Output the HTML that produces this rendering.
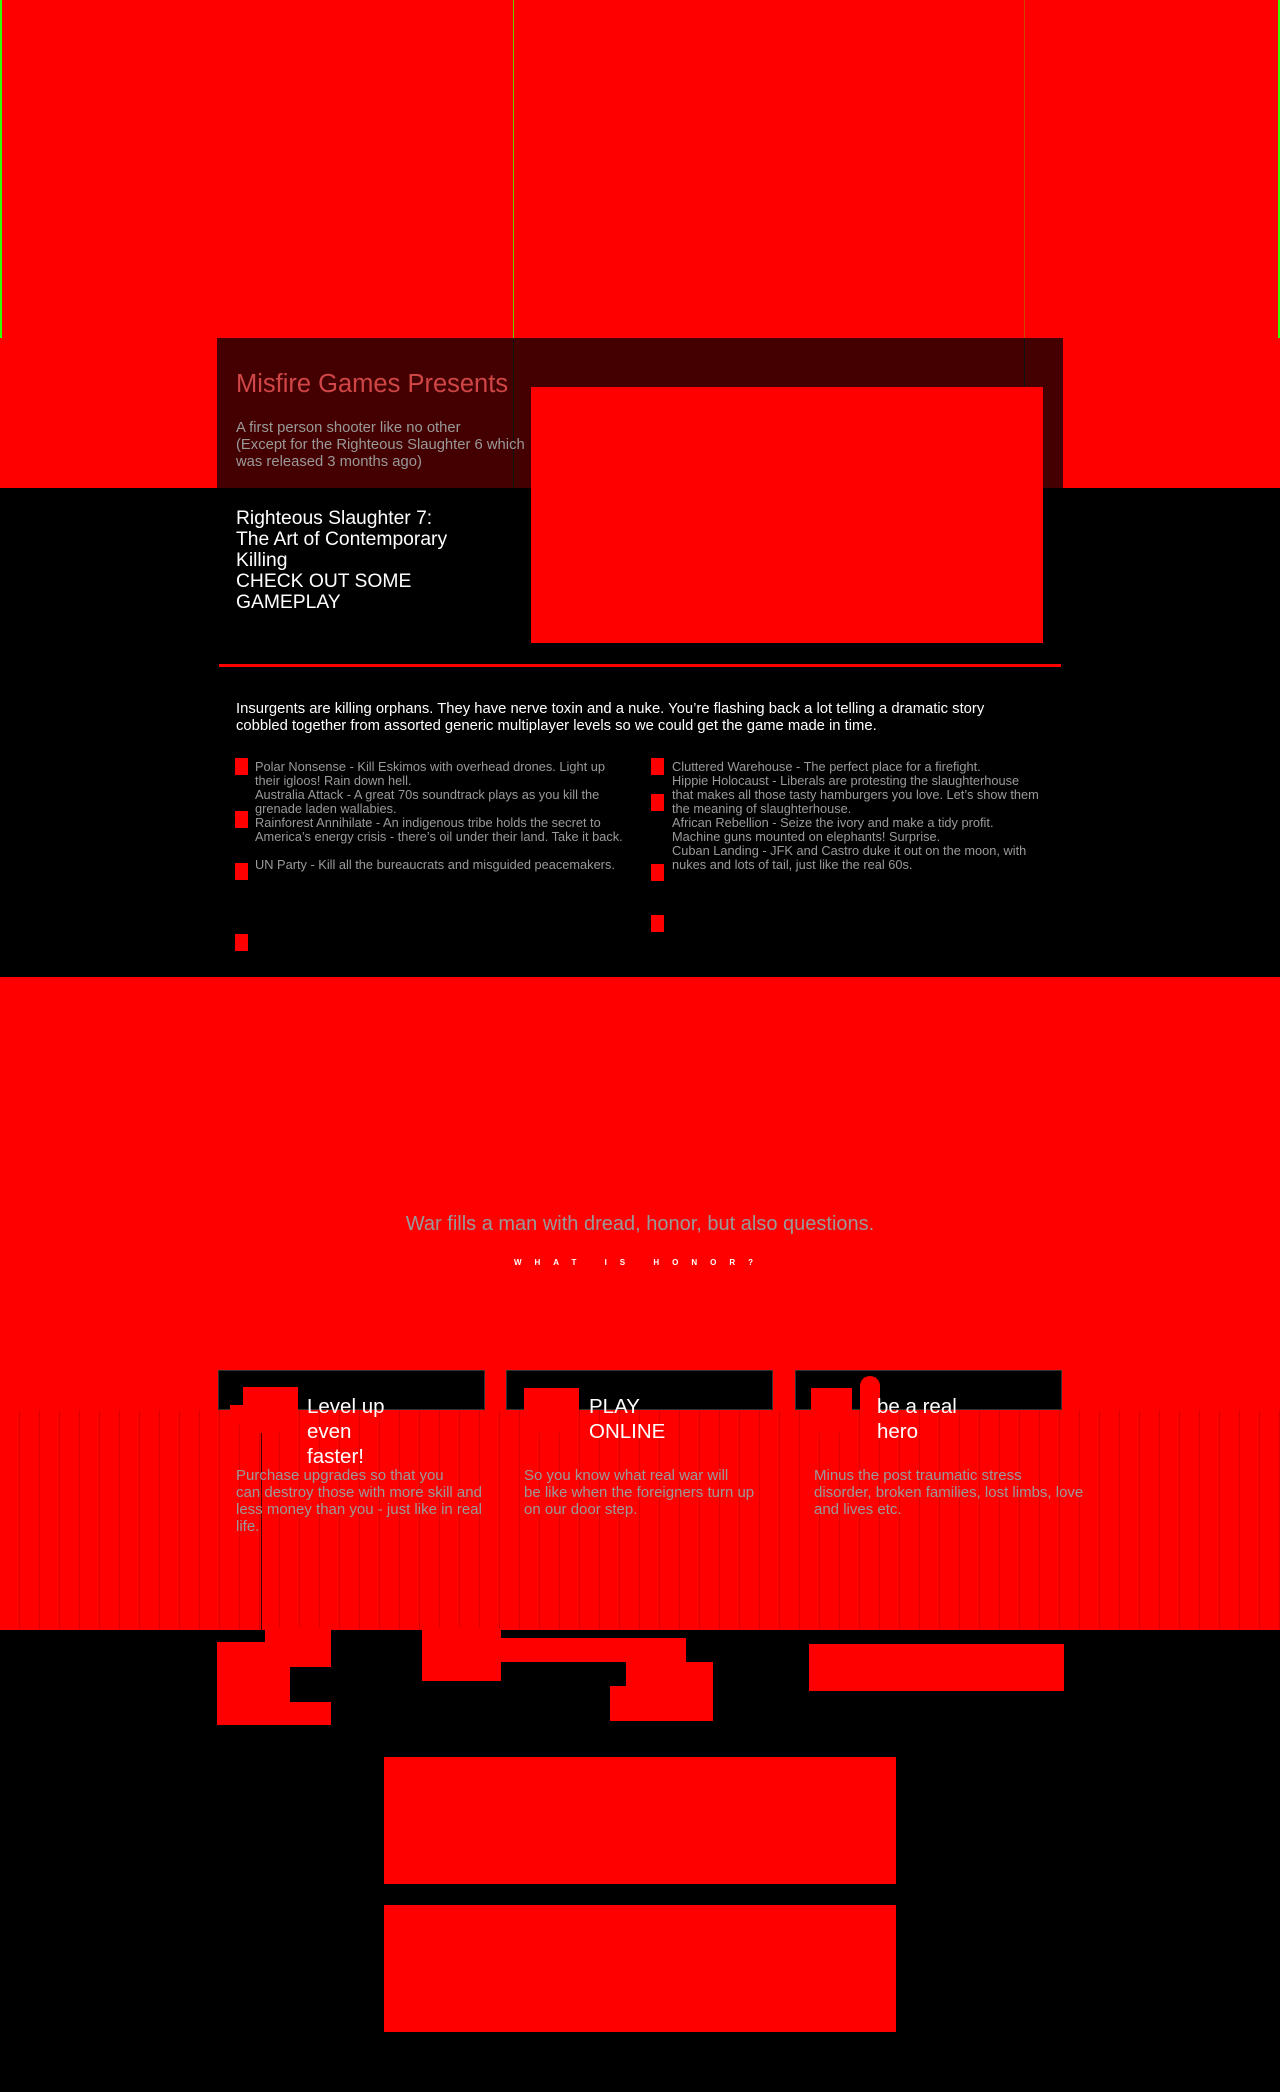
<!DOCTYPE html>
<html><head><meta charset="utf-8"><style>
*{margin:0;padding:0;box-sizing:border-box}
body{width:1280px;height:2092px;background:#000;position:relative;overflow:hidden;font-family:"Liberation Sans",sans-serif}
.a{position:absolute}
.r{background:#f00}
.li{position:absolute;font-size:12.8px;line-height:14px;color:#9a9a9a}
.bul{position:absolute;width:13px;height:17px;background:#f00}
.h{position:absolute;color:#fff;font-size:20.5px;line-height:25px}
.p{position:absolute;color:#9a9a9a;font-size:15px;line-height:17px;white-space:nowrap}
</style></head><body>
<div class="a r" style="left:0;top:0;width:1280px;height:488px"></div>
<div class="a" style="left:0;top:0;width:2px;height:338px;background:#3f0"></div>
<div class="a" style="left:513px;top:0;width:1px;height:338px;background:#6c0"></div>
<div class="a" style="left:1024px;top:0;width:1px;height:338px;background:#c40"></div>
<div class="a" style="left:1278px;top:0;width:2px;height:338px;background:#3f0"></div>
<div class="a" style="left:217px;top:338px;width:846px;height:150px;background:#440000"></div>
<div class="a" style="left:513px;top:338px;width:1px;height:150px;background:#111"></div>
<div class="a" style="left:1024px;top:338px;width:1px;height:150px;background:#111"></div>
<div class="a" style="left:236px;top:370px;font-size:25.5px;color:#d04545;white-space:nowrap">Misfire Games Presents</div>
<div class="a" style="left:236px;top:420px;font-size:14.8px;line-height:17px;color:#999;white-space:nowrap">A first person shooter like no other<br>(Except for the Righteous Slaughter 6 which<br>was released 3 months ago)</div>
<div class="a r" style="left:531px;top:387px;width:512px;height:256px"></div>
<div class="a" style="left:236px;top:508px;font-size:19.3px;line-height:21px;color:#fff">Righteous Slaughter 7:<br>The Art of Contemporary<br>Killing<br>CHECK OUT SOME<br>GAMEPLAY</div>
<div class="a r" style="left:219px;top:664px;width:842px;height:3px"></div>

<div class="a" style="left:236px;top:701px;font-size:14.8px;line-height:17px;color:#fff;white-space:nowrap">Insurgents are killing orphans. They have nerve toxin and a nuke. You’re flashing back a lot telling a dramatic story<br>cobbled together from assorted generic multiplayer levels so we could get the game made in time.</div>
<div class="bul" style="left:235px;top:758px"></div>
<div class="bul" style="left:235px;top:811px"></div>
<div class="bul" style="left:235px;top:863px"></div>
<div class="bul" style="left:235px;top:934px"></div>
<div class="li" style="left:255px;top:760px;white-space:nowrap">Polar Nonsense - Kill Eskimos with overhead drones. Light up<br>their igloos! Rain down hell.<br>Australia Attack - A great 70s soundtrack plays as you kill the<br>grenade laden wallabies.<br>Rainforest Annihilate - An indigenous tribe holds the secret to<br>America’s energy crisis - there’s oil under their land. Take it back.<br><br>UN Party - Kill all the bureaucrats and misguided peacemakers.</div>
<div class="bul" style="left:651px;top:758px"></div>
<div class="bul" style="left:651px;top:794px"></div>
<div class="bul" style="left:651px;top:864px"></div>
<div class="bul" style="left:651px;top:915px"></div>
<div class="li" style="left:672px;top:760px;white-space:nowrap">Cluttered Warehouse - The perfect place for a firefight.<br>Hippie Holocaust - Liberals are protesting the slaughterhouse<br>that makes all those tasty hamburgers you love. Let’s show them<br>the meaning of slaughterhouse.<br>African Rebellion - Seize the ivory and make a tidy profit.<br>Machine guns mounted on elephants! Surprise.<br>Cuban Landing - JFK and Castro duke it out on the moon, with<br>nukes and lots of tail, just like the real 60s.</div>

<div class="a r" style="left:0;top:977px;width:1280px;height:653px"></div>
<div class="a" style="left:0;top:1213px;width:1280px;text-align:center;font-size:20px;color:#999">War fills a man with dread, honor, but also questions.</div>
<div class="a" style="left:0;top:1258px;width:1280px;text-align:center;font-size:8px;font-weight:bold;color:#fff;letter-spacing:13px">WHAT IS HONOR?</div>
<div class="a" style="left:218px;top:1370px;width:267px;height:40px;background:#000;border:1px solid #333"></div>
<div class="a" style="left:506px;top:1370px;width:267px;height:40px;background:#000;border:1px solid #333"></div>
<div class="a" style="left:795px;top:1370px;width:267px;height:40px;background:#000;border:1px solid #333"></div>
<div class="a" style="left:0;top:1410px;width:1280px;height:220px;background:repeating-linear-gradient(90deg,#f00 0,#f00 19px,#d00 19px,#d00 20px)"></div>
<div class="a" style="left:261px;top:1430px;width:1px;height:200px;background:#400"></div>
<div class="a r" style="left:243px;top:1387px;width:55px;height:46px"></div>
<div class="a r" style="left:230px;top:1405px;width:20px;height:20px"></div>
<div class="a r" style="left:524px;top:1388px;width:55px;height:45px"></div>
<div class="a r" style="left:811px;top:1388px;width:41px;height:45px"></div>
<div class="a r" style="left:860px;top:1376px;width:20px;height:50px;border-radius:10px 10px 0 0"></div>
<div class="h" style="left:307px;top:1394px">Level up<br>even<br>faster!</div>
<div class="h" style="left:589px;top:1394px">PLAY<br>ONLINE</div>
<div class="h" style="left:877px;top:1394px">be a real<br>hero</div>
<div class="p" style="left:236px;top:1467px">Purchase upgrades so that you<br>can destroy those with more skill and<br>less money than you - just like in real<br>life.</div>
<div class="p" style="left:524px;top:1467px">So you know what real war will<br>be like when the foreigners turn up<br>on our door step.</div>
<div class="p" style="left:814px;top:1467px">Minus the post traumatic stress<br>disorder, broken families, lost limbs, love<br>and lives etc.</div>

<div class="a r" style="left:265px;top:1628px;width:66px;height:16px"></div>
<div class="a r" style="left:217px;top:1642px;width:114px;height:83px"></div>
<div class="a" style="left:290px;top:1667px;width:41px;height:35px;background:#000"></div>
<div class="a r" style="left:422px;top:1628px;width:79px;height:53px"></div>
<div class="a r" style="left:499px;top:1638px;width:187px;height:24px"></div>
<div class="a r" style="left:610px;top:1662px;width:103px;height:59px"></div>
<div class="a" style="left:610px;top:1662px;width:16px;height:24px;background:#000"></div>
<div class="a r" style="left:809px;top:1644px;width:255px;height:47px"></div>
<div class="a r" style="left:384px;top:1757px;width:512px;height:127px"></div>
<div class="a r" style="left:384px;top:1905px;width:512px;height:127px"></div>
</body></html>
